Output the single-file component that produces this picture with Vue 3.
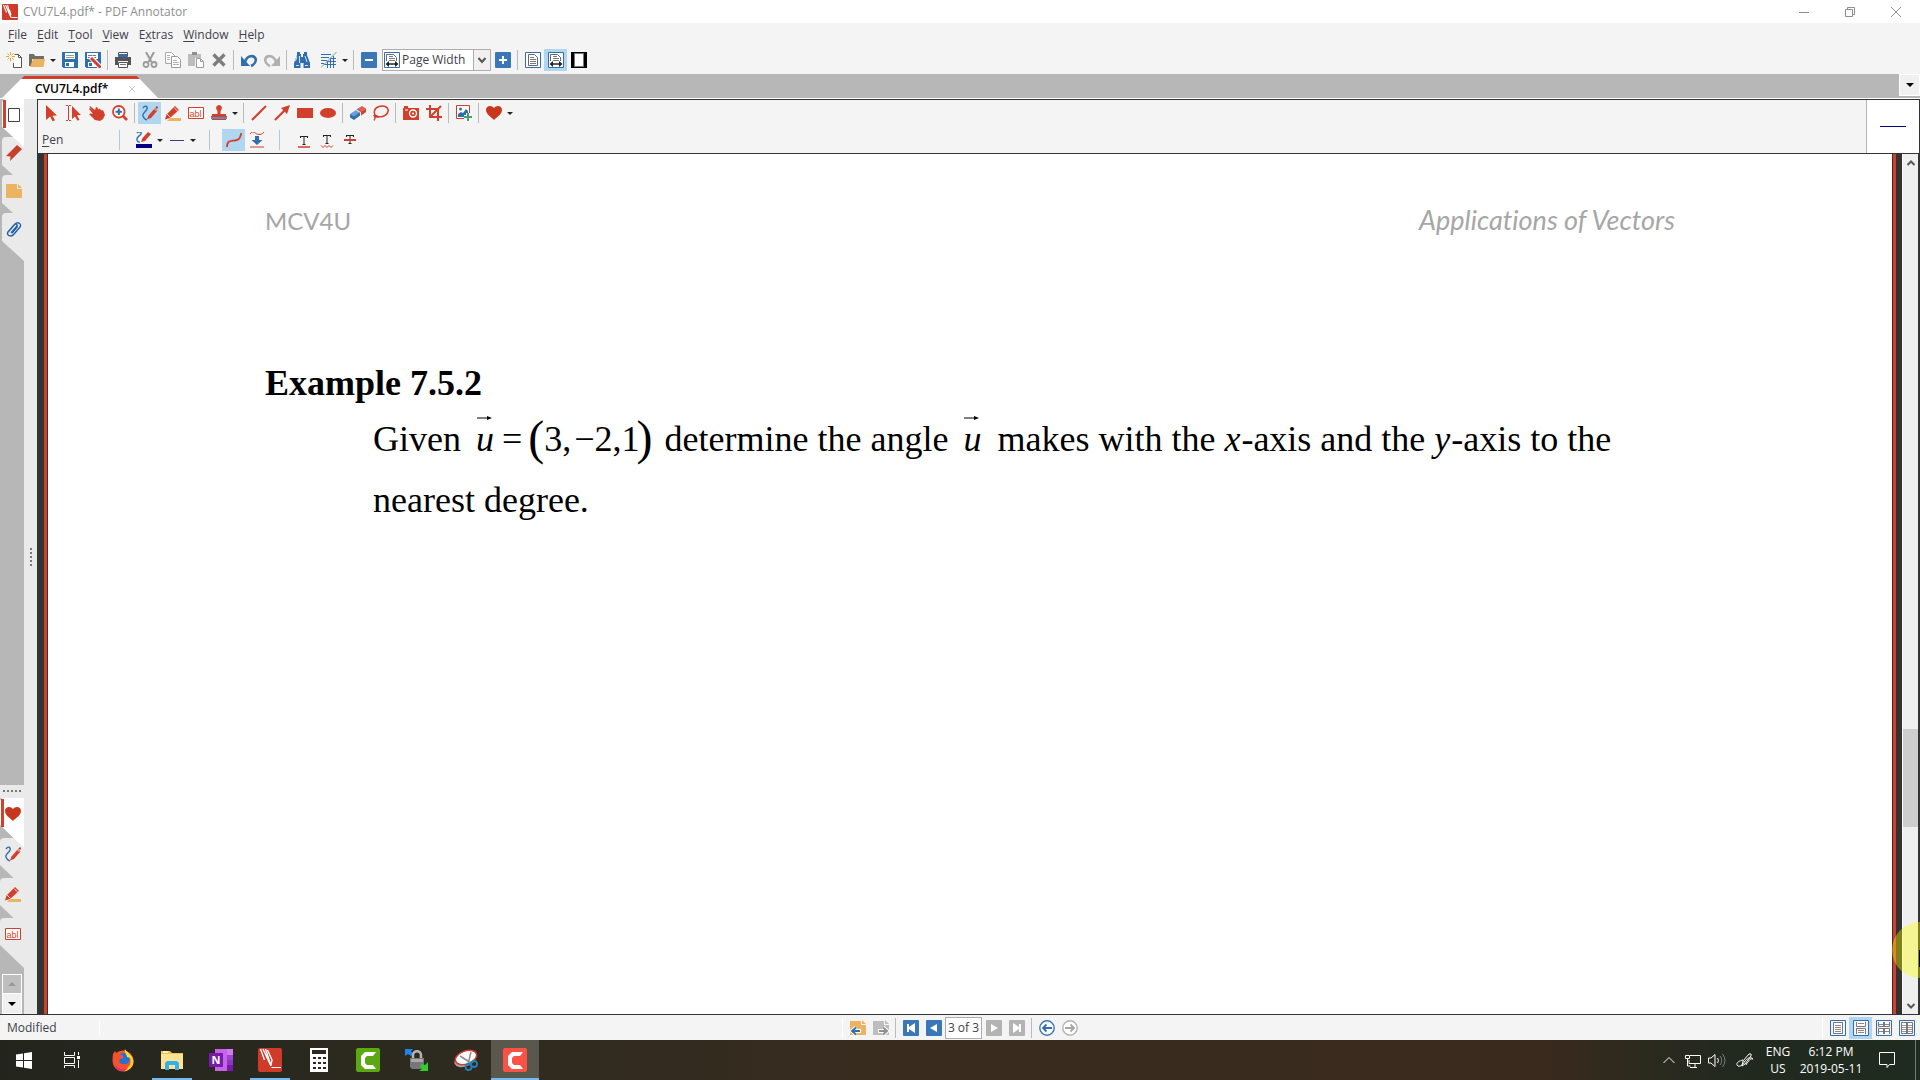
<script setup>
import { ref } from 'vue'

const icons = {
    logo: '<rect width="16" height="16" rx="1" fill="#d03a28"/><path d="M1.500 1l3 7.500M3.500 1l5 11.500M5.500 1l3.500 12.500M7.500 6l1.500 5" stroke="#fff" fill="none" stroke-width="1.100"/><path d="M9.500 13.500h6" stroke="#fff"/>',
    newDoc: '<path d="M8.500 2.500h4l3 3v10h-8V11" fill="#fff" stroke="#555"/><path d="M12.500 2.500v3h3" fill="none" stroke="#555"/><path d="M4.500 0v9M0 4.500h9M1.500 1.500l6 6M7.500 1.500l-6 6" stroke="#e8a53c"/><circle cx="4.500" cy="4.500" r="1.500" fill="#fff"/>',
    open: '<path d="M0 2h5l1 2h9v3H3v7H0z" fill="#6e6e6e"/><path d="M4 7h12l-1.500 8H1z" fill="#ecb461"/>',
    save: '<path d="M0 0h16v16H1.500L0 14.500z" fill="#2f6fb0"/><path d="M3 1h10v6H3zM3 10h9v5H3z" fill="#fff"/><path d="M4 3.500h8M4 5.500h8" stroke="#999"/><path d="M4 11h3v3H4z" fill="#2f6fb0"/>',
    saveAs: '<path d="M0 0h16v16H1.500L0 14.500z" fill="#2f6fb0"/><path d="M2 1h11v6H2zM3 10h9v5H3z" fill="#fff"/><path d="M3 3.500h8M3 5.500h8" stroke="#777"/><path d="M4 11h3v3H4z" fill="#2f6fb0"/><path d="M5.500 5l10 10.500" stroke="#fff" stroke-width="5"/><path d="M6 6l9.500 9.500" stroke="#d23f2a" stroke-width="3"/>',
    print: '<path d="M3.500.5h9v4h-9z" fill="#fff" stroke="#555"/><path d="M4 2h8v3H4z" fill="#2f6fb0"/><path d="M0 5h16v8h-3V9H3v4H0z" fill="#555"/><path d="M3.500 10.500h9v5h-9z" fill="#fff" stroke="#555"/><path d="M5 12.500h6" stroke="#777"/>',
    cut: '<path d="M4 0l5.500 10M12 0L6.500 10" stroke="#9b9b9b" stroke-width="2"/><circle cx="4" cy="12.500" r="2.500" fill="none" stroke="#9b9b9b" stroke-width="1.800"/><circle cx="12" cy="12.500" r="2.500" fill="none" stroke="#9b9b9b" stroke-width="1.800"/>',
    copy: '<path d="M.5.5h6l3 3v8h-9z" fill="#fff" stroke="#aaa"/><path d="M6.500 4.500h6l3 3v8h-9z" fill="#fff" stroke="#9b9b9b"/><path d="M2 3.500h3M2 5.500h3M2 7.500h3M8 8.500h4M8 10.500h6M8 12.500h6" stroke="#b5b5b5"/>',
    paste: '<path d="M0 2h13v4H7v8H0z" fill="#bdbdbd"/><path d="M4 0h5v3H4z" fill="#8f8f8f"/><path d="M8.500 6.500h4l3 3v6h-7z" fill="#fff" stroke="#9b9b9b"/><path d="M12.500 7v2.500H15" fill="none" stroke="#9b9b9b"/>',
    del: '<path d="M2.500 2.500l11 11M13.500 2.500l-11 11" stroke="#7d7d7d" stroke-width="3.200"/>',
    undo: '<path d="M4 10c2-7 9-7 10.500-3.500C15.500 9.500 13 12.500 10 14" fill="none" stroke="#2f6fb0" stroke-width="2.600"/><path d="M0 4v10h9z" fill="#2f6fb0"/>',
    redo: '<path d="M12 10C10 3 3 3 1.500 6.500.5 9.500 3 12.500 6 14" fill="none" stroke="#b0b0b0" stroke-width="2.600"/><path d="M16 4v10H7z" fill="#b0b0b0"/>',
    find: '<path d="M3 0h3v2h1v3h2V2h1V0h3v3l3 8v5H9.500v-5h-3v5H0v-5l3-8z" fill="#2f6fb0"/><path d="M3 4.500L1.500 9M5.500 4v7M11 4l2 6M2 13.500h3M11 13.500h3" stroke="#fff" stroke-width=".8"/>',
    grid: '<path d="M0 2.500h10M0 5.500h8M0 8.500h6M0 11.500h3M9 6.500h6M6 9.500h9M3 12.500h12M6.500 9v7M9.500 7v9M12.500 4v12" stroke="#2f6fb0"/><path d="M0 15.500L15.500 0" stroke="#6c9cc9"/>',
    minus: '<rect width="16" height="16" rx="1" fill="#3a77b7"/><path d="M4 8h8" stroke="#fff" stroke-width="2"/>',
    plus: '<rect width="16" height="16" rx="1" fill="#3a77b7"/><path d="M4 8h8M8 4v8" stroke="#fff" stroke-width="2"/>',
    fullPage: '<path d="M.5.5h15v15H.5z" fill="#fff" stroke="#2f6fb0"/><path d="M3.500 2.500h6l3 3v8h-9z" fill="#fff" stroke="#666"/><path d="M5 5.500h4M5 7.500h6M5 9.500h6M5 11.500h6" stroke="#777"/>',
    pageWidth: '<path d="M.5.5h15v15H.5z" fill="#fff" stroke="#2f6fb0"/><path d="M2.500 9V2.500h7l3 3V9" fill="#fff" stroke="#666"/><path d="M5 4.500h4M5 6.500h6M5 8.500h6" stroke="#777"/><path d="M3 12h10" stroke="#222" stroke-width="1.500"/><path d="M1.500 12l3.500-3v6zM14.500 12L11 9v6z" fill="#222"/>',
    fullScreen: '<path d="M0 0h16v16H0z"/><path d="M3.500 1.500h9v13h-9z" fill="#fff" stroke="#777"/>',
    select: '<path d="M3 0l11 10.500-4.500.3 2.500 4.500-2.500 1-2.300-4.700L3 15z" fill="#d23f2a"/>',
    textSelect: '<path d="M0 .5h2M3 .5h2M2.500 1v14M0 15.500h2M3 15.500h2" stroke="#d23f2a"/><path d="M6 1l9 9-4 .3 2.500 4.500-2 1L9 11.500 6 14z" fill="#d23f2a"/>',
    hand: '<path d="M1 1l5 4 1-3 1.500.5.5 2 2-1 1 2 2-.5L16 10l-2 4-3 2-5-1-6-6 2-.5L4 9 0 4l1-1 4 4L.5 2z" fill="#d23f2a"/>',
    zoom: '<circle cx="6.800" cy="6.800" r="5.800" fill="#fff" stroke="#d23f2a" stroke-width="1.800"/><path d="M3.500 6.800h6.600M6.800 3.500v6.600" stroke="#2f6fb0" stroke-width="2"/><path d="M11 11l4 4" stroke="#d23f2a" stroke-width="2.600"/>',
    pen: '<path d="M1 3c2-3 5-2 4 1S0 8 1 11s2 3 4 4" fill="none" stroke="#2f6fb0" stroke-width="1.400"/><path d="M5 14.500l1.500-4L13 3l2.500 2.500L9 13z" fill="#d23f2a"/><path d="M13.500 2.500L15 1l1 1.500-1 1.500z" fill="#b52e1d"/><path d="M12 3.500l2.500 2.500" stroke="#fff" stroke-width=".7"/>',
    marker: '<path d="M5 13h11v3H2z" fill="#ecb461"/><path d="M0 14.500l1.500-5L10 1l4 4-9 8z" fill="#d23f2a"/><path d="M9 2.500l4 4M2 9l3.500 3.500" stroke="#fff" stroke-width=".8"/>',
    textBox: '<path d="M.5 2.500h15v11H.5z" fill="#fff" stroke="#d23f2a"/><text x="1.500" y="11.500" font-family="Liberation Sans, sans-serif" font-size="9" fill="#d23f2a">abl</text>',
    stamp: '<path d="M8 0a3 3 0 0 1 2.500 4.500L9.500 6v3H15v2H1V9h5.500V6l-1-1.500A3 3 0 0 1 8 0z" fill="#d23f2a"/><path d="M0 12h16v2H0z" fill="#6c86b5"/><path d="M0 11h16v1H0zM1 14h14v1H1z" fill="#d23f2a"/>',
    line: '<path d="M1 15L15 1" stroke="#d23f2a" stroke-width="2"/>',
    arrow: '<path d="M1 15L12 4" stroke="#d23f2a" stroke-width="2.200"/><path d="M16 0l-3 9-6-6z" fill="#d23f2a"/>',
    rect: '<path d="M0 3h16v10H0z" fill="#d23f2a"/>',
    ellipse: '<ellipse cx="8" cy="8" rx="8" ry="5" fill="#d23f2a"/>',
    eraser: '<path d="M0 9l9-6 3 3-8 7.500z" fill="#69a0d6"/><path d="M0 9l4 2.500V15l-4-2.500zM4 11.500L10 7v3.500L4 15z" fill="#2f6fb0"/><path d="M7 4l5-3 4 2.500L10.500 7z" fill="#e0604d"/><path d="M10.500 7L16 3.500V7l-5.500 4z" fill="#d23f2a"/><path d="M6 5l4.500 2.500V11" fill="none" stroke="#fff" stroke-width=".8"/>',
    lasso: '<path d="M3 11C0 8 1 3 6 1.500s10 .5 9 5-8 6.500-12 4.500" fill="none" stroke="#d23f2a" stroke-width="1.500"/><path d="M0 10h4l2 3-3-.5L1.500 16l-1-1 1-2z" fill="#d23f2a"/>',
    camera: '<path d="M1 1h4v2h11v12H0V3h1z" fill="#d23f2a"/><circle cx="10" cy="8.500" r="3.500" fill="none" stroke="#fff" stroke-width="1.400"/><circle cx="10" cy="8.500" r="1" fill="#fff"/><path d="M2 5h3" stroke="#fff"/>',
    crop: '<path d="M0 4h12v12M4 0v12h12M15 1L4 12" fill="none" stroke="#d23f2a" stroke-width="2"/>',
    picture: '<path d="M.5.5h13v13H.5z" fill="#fff" stroke="#d23f2a"/><path d="M2 12V9l3-2 2 1 3-4 2 2v6z" fill="#2f6fb0"/><circle cx="4.500" cy="4" r="1.500" fill="#2f6fb0"/><path d="M12 8v8M8 12h8" stroke="#fff" stroke-width="4"/><path d="M12 8v8M8 12h8" stroke="#3ca371" stroke-width="2"/>',
    heart: '<path d="M8 15C5 12 0 9 0 5c0-5 6-5 8-2 2-3 8-3 8 2 0 4-5 7-8 10z" fill="#c8361c"/>',
    penColor: '<path d="M1 1c2-2 5-1 4 1S0 5 1 8s2 2 3 2" fill="none" stroke="#2f6fb0" stroke-width="1.400"/><path d="M5 10l1.500-4L12 0l3 2-6 7z" fill="#d23f2a"/><path d="M0 12h16v4H0z" fill="#000080"/>',
    thin: '<path d="M1 8.500h14" stroke="#3c3c8c"/>',
    curve: '<path d="M1 15c0-7 4-6 8-6.500C14 8 14 5 15.500 1" fill="none" stroke="#d23f2a" stroke-width="1.800"/>',
    snap: '<path d="M1 2c2-3 4-2 6-.5S13 3 15 0" fill="none" stroke="#d23f2a"/><path d="M6 4h4v4h3.500L8 13 2.500 8H6z" fill="#2f6fb0"/><path d="M1 15h14" stroke="#d23f2a"/>',
    under: '<path d="M4 4.500h8M8 4v9M6.500 12.500h3M4.500 4v2M11.500 4v2" stroke="#222"/><path d="M2 15h12" stroke="#d23f2a" stroke-width="1.500"/>',
    squiggle: '<path d="M4 3.500h8M8 3v9M6.500 11.500h3M4.500 3v2M11.500 3v2" stroke="#222"/><path d="M2 13.500l2 2 2-2 2 2 2-2 2 2 2-2" fill="none" stroke="#d23f2a"/>',
    strike: '<path d="M4 3.500h8M8 3v9M6.500 11.500h3M4.500 3v2M11.500 3v2" stroke="#222"/><path d="M2 8h12" stroke="#d23f2a" stroke-width="2"/>',
    page: '<path d="M2.500 1.500h11v13h-11z" fill="#fff" stroke="#444"/>',
    bookmark: '<path d="M0 11L11 0l5 4L4 16l.5-4.500z" fill="#c8402a"/>',
    note: '<path d="M0 1h11v5h5v9H0z" fill="#ecb461"/><path d="M12 1l4 4h-4z" fill="#ecb461"/>',
    clip: '<path d="M3 10l6-7c3-3 7 0 5 3l-6 7c-3 4-8 1-6-2l6-7c2-2 4 0 3 2l-5 6M5 12l6-7" fill="none" stroke="#1f5fa8" stroke-width="1.400"/>',
    notePrev: '<path d="M0 1h11v4h5v10H0z" fill="#ecb461"/><path d="M12 0l4 4h-4z" fill="#ecb461"/><path d="M2 11h9M6 7.500L2 11l4 3.500" fill="none" stroke="#fff" stroke-width="4"/><path d="M2 11h8M6 7.500L2 11l4 3.500" fill="none" stroke="#2f6fb0" stroke-width="2"/>',
    noteNext: '<path d="M0 1h11v4h5v10H0z" fill="#bdbdbd"/><path d="M12 0l4 4h-4z" fill="#bdbdbd"/><path d="M5 11h9M10 7.500l4 3.500-4 3.500" fill="none" stroke="#fff" stroke-width="4"/><path d="M6 11h8M10 7.500l4 3.500-4 3.500" fill="none" stroke="#8f8f8f" stroke-width="2"/>',
    first: '<rect width="16" height="16" rx="1" fill="#3a77b7"/><path d="M4 4h2v3l6-4v10L6 9v3H4z" fill="#fff"/>',
    prev: '<rect width="16" height="16" rx="1" fill="#3a77b7"/><path d="M11 4v8L4 8z" fill="#fff"/>',
    next: '<rect width="16" height="16" rx="1" fill="#b3b3b3"/><path d="M5 4v8l7-4z" fill="#fff"/>',
    last: '<rect width="16" height="16" rx="1" fill="#b3b3b3"/><path d="M12 4h-2v3L4 3v10l6-4v3h2z" fill="#fff"/>',
    back: '<circle cx="8" cy="8" r="7.200" fill="#fff" stroke="#3a77b7" stroke-width="1.400"/><path d="M4 8h9M7.500 4.500L4 8l3.500 3.500" fill="none" stroke="#2f6fb0" stroke-width="1.800"/>',
    forward: '<circle cx="8" cy="8" r="7.200" fill="#fff" stroke="#b3b3b3" stroke-width="1.400"/><path d="M3 8h9M8.500 4.500L12 8l-3.500 3.500" fill="none" stroke="#a5a5a5" stroke-width="1.800"/>',
    viewSingle: '<path d="M.5.5h15v15H.5z" fill="#f4f4f4" stroke="#2f6fb0"/><path d="M3.500 2.500h9v11h-9z" fill="#fff" stroke="#777"/><path d="M5 5.500h6M5 7.500h6M5 9.500h6M5 11.500h6" stroke="#888"/>',
    viewScroll: '<path d="M.5.5h15v15H.5z" fill="#f4f4f4" stroke="#2f6fb0"/><path d="M3.500 2v4.500h9V2M3.500 14V8.500h9V14" fill="#fff" stroke="#777"/><path d="M5 3.500h6M5 10.500h6M5 12.500h6" stroke="#888"/>',
    viewTwoScroll: '<path d="M.5.5h15v15H.5z" fill="#f4f4f4" stroke="#2f6fb0"/><path d="M2.500 2v4.500h11V2M2.500 14V8.500h11V14" fill="#fff" stroke="#777"/><path d="M3 4.500h10M3 11.500h10" stroke="#888"/><path d="M8 2v5M8 9v5" stroke="#777" stroke-width="2"/>',
    viewTwo: '<path d="M.5.5h15v15H.5z" fill="#f4f4f4" stroke="#2f6fb0"/><path d="M2.500 2.500h11v11h-11z" fill="#fff" stroke="#777"/><path d="M3 5.500h10M3 7.500h10M3 9.500h10M3 11.500h10" stroke="#999"/><path d="M8 2v12" stroke="#777" stroke-width="2"/>'
}

const menus = [['', 'F', 'ile'], ['', 'E', 'dit'], ['', 'T', 'ool'], ['', 'V', 'iew'], ['E', 'x', 'tras'], ['', 'W', 'indow'], ['', 'H', 'elp']]

const fileTools = ['newDoc', 'open', 'drop', 'save', 'saveAs', '|', 'print', ' ', 'cut', 'copy', 'paste', 'del', '|', 'undo', 'redo', '|', 'find', ' ', 'grid', 'drop', '|', 'minus']
const viewTools = ['plus', '|', 'fullPage', 'pageWidth', 'fullScreen']
const drawTools = ['select', 'textSelect', 'hand', 'zoom', '|', 'pen', 'marker', 'textBox', 'stamp', 'drop', '|', 'line', 'arrow', 'rect', 'ellipse', '|', 'eraser', 'lasso', '|', 'camera', 'crop', '|', 'picture', '|', 'heart', 'drop']
const penTools = ['penColor', 'drop', 'thin', 'drop']
const penModes = ['curve', 'snap']
const penMarks = ['under', 'squiggle', 'strike']
const active = ['pageWidth', 'pen', 'curve', 'viewScroll']

const navTabs = ['page', 'bookmark', 'note', 'clip']
const toolTabs = ['heart', 'pen', 'marker', 'textBox']

const zoomMode = ref('Page Width')
const pageNo = ref('3 of 3')
const scroll = { before: 559, size: 98, after: 170 }

const apps = [
    { name: 'Firefox', svg: '<circle cx="12" cy="13" r="10.500" fill="#f7572b"/><path d="M13 2c4 2 9 6 9.500 11S18 23 13 23.500C19 20 20 9 13 2z" fill="#ffcf2e"/><circle cx="12.500" cy="11.500" r="6.500" fill="#1b74d6"/><path d="M2 6l2-3 2 3 5 1 2 3-4 1c-2 3 1 6 5 5 3 0 5-3 5-6 2 5-1 11-7 11S0 16 2 6z" fill="#f5512c"/><path d="M4 16c2 5 8 7 13 4-3 4-12 5-13-4z" fill="#e3287c"/><path d="M14 1c1 3 5 4 6 9l-4-1c0-3-3-4-2-8z" fill="#ffdb3c"/>' },
    { name: 'File Explorer', open: true, svg: '<path d="M1 3h9l2 2h11v16H1z" fill="#f3c24f"/><path d="M1 6h22v15H1z" fill="#ffe394"/><path d="M3 3h5v2H3z" fill="#fff2c5"/><path d="M5 22v-7l2-2h10l2 2v7h-4v-5H9v5z" fill="#35b0ea"/>' },
    { name: 'OneNote', svg: '<path d="M6 1h18v22H6z" fill="#c765e8"/><path d="M18 1h6v6h-6z" fill="#cf7bee"/><path d="M18 7h6v5h-6z" fill="#a242d3"/><path d="M18 12h6v5h-6z" fill="#8e36c4"/><path d="M18 17h6v6h-6z" fill="#7719aa"/><path d="M0 5h14v14H0z" fill="#7719aa"/><text x="2.500" y="16" font-family="Open Sans, sans-serif" font-weight="700" font-size="11" fill="#fff">N</text>' },
    { name: 'PDF Annotator', open: true, svg: '<rect width="24" height="24" rx="2" fill="#d03a28"/><path d="M2.500 1l4 11M5 1l7.500 16M7.500 1l5.500 17M9.500 2l4.500 10-1 5" fill="none" stroke="#fff" stroke-width="1.400"/><path d="M13.500 19.500H23" stroke="#fff"/>' },
    { name: 'Calculator', svg: '<path d="M3 0h18v24H3z" fill="#fff"/><path d="M5 2h14v4H5zM6 9h3v2H6zM11 9h3v2h-3zM16 9h3v2h-3zM6 14h3v2H6zM11 14h3v2h-3zM16 14h3v2h-3zM6 19h3v2H6zM11 19h3v2h-3zM16 19h3v2h-3z" fill="#2c2a20"/>' },
    { name: 'Camtasia', svg: '<rect width="24" height="24" rx="2" fill="#5ba812"/><path d="M20 4H9L5 8v9l4 4h11l-3-4h-6l-2-2v-5l2-2h6z" fill="#fff"/>' },
    { name: 'Secure Transfer', svg: '<path d="M0 1h8l-2 2 2 3-2 2-3-2-3 2z" fill="#2183f2"/><path d="M8 12V7c0-5 8-5 8 0v5" fill="none" stroke="#b5b5b5" stroke-width="2.500"/><path d="M5 10h14v11H7l-2-2z" fill="#777"/><path d="M6 11h12v3H6z" fill="#a9a9a9"/><path d="M23 23h-9l3-2-2-3 2-2 3 1 3-3z" fill="#2fd02f"/>' },
    { name: 'Snipping Tool', svg: '<ellipse cx="11" cy="12" rx="11" ry="6.500" fill="#a8a8a8" transform="rotate(-20 11 12)"/><ellipse cx="12" cy="9.500" rx="11" ry="6.500" fill="#fff" stroke="#d9372f" stroke-width="1.500" transform="rotate(-20 12 9.500)"/><path d="M6 8l11 7M17 4l-3 12" stroke="#8d8d8d" stroke-width="1.500"/><circle cx="14.500" cy="19" r="3" fill="none" stroke="#277fb5" stroke-width="1.800"/><circle cx="20" cy="16" r="3" fill="none" stroke="#277fb5" stroke-width="1.800"/>' },
    { name: 'Camtasia Recorder', current: true, svg: '<rect width="24" height="24" rx="2" fill="#fb5245"/><path d="M20 4H9L5 8v9l4 4h11l-3-4h-6l-2-2v-5l2-2h6z" fill="#fff"/>' }
]
</script>

<template>
    <div class="screen">
        <header class="title-bar">
            <svg class="icon" viewBox="0 0 16 16" v-html="icons.logo"></svg>
            <span class="title">CVU7L4.pdf* - PDF Annotator</span>
            <div class="window-buttons">
                <button aria-label="Minimize"><svg class="icon" viewBox="0 0 16 16"><path d="M3 8.500h10" /></svg></button>
                <button aria-label="Restore"><svg class="icon" viewBox="0 0 16 16"><path d="M3.500 5.500h7v7h-7zM5.500 5V3.500h7v7H11" /></svg></button>
                <button aria-label="Close"><svg class="icon" viewBox="0 0 16 16"><path d="M3 3l10 10M13 3L3 13" /></svg></button>
            </div>
        </header>

        <nav class="menu-bar">
            <button v-for="m in menus" :key="m.join('')">{{ m[0] }}<u>{{ m[1] }}</u>{{ m[2] }}</button>
        </nav>

        <div class="toolbar main-tools">
            <template v-for="(t, i) in fileTools" :key="i">
                <i v-if="t === '|'" class="sep"></i>
                <i v-else-if="t === ' '" class="space"></i>
                <button v-else-if="t === 'drop'" class="drop" aria-label="More"></button>
                <button v-else class="tool" :aria-label="t"><svg class="icon" viewBox="0 0 16 16" v-html="icons[t]"></svg></button>
            </template>
            <label class="combo">
                <svg class="icon" viewBox="0 0 16 16" v-html="icons.pageWidth"></svg>
                <select v-model="zoomMode" aria-label="Zoom">
                    <option>Page Width</option>
                    <option>Full Page</option>
                </select>
                <span class="combo-arrow"><svg viewBox="0 0 10 10"><path d="M1.500 3L5 7l3.500-4" /></svg></span>
            </label>
            <template v-for="(t, i) in viewTools" :key="i">
                <i v-if="t === '|'" class="sep"></i>
                <button v-else class="tool" :class="{ on: active.includes(t) }" :aria-label="t"><svg class="icon" viewBox="0 0 16 16" v-html="icons[t]"></svg></button>
            </template>
        </div>

        <div class="tab-bar">
            <div class="doc-tab">
                <span>CVU7L4.pdf*</span>
                <button aria-label="Close tab"><svg viewBox="0 0 8 8"><path d="M1 1l6 6M7 1L1 7" /></svg></button>
            </div>
            <button class="tab-list" aria-label="Documents"></button>
        </div>

        <main class="work">
            <aside class="side">
                <div class="strip">
                    <div class="tabs nav">
                        <button v-for="(t, i) in navTabs" :key="t" :class="{ on: i === 0 }" :aria-label="t">
                            <svg class="shape" viewBox="0 0 24 48"><path d="M24 0H6Q2 0 2 4v24l22 20z" /></svg>
                            <svg class="icon" viewBox="0 0 16 16" v-html="icons[t]"></svg>
                        </button>
                    </div>
                    <div class="grip row"></div>
                    <div class="tabs tools">
                        <button v-for="(t, i) in toolTabs" :key="t" :class="{ on: i === 0 }" :aria-label="t">
                            <svg class="shape" viewBox="0 0 24 48"><path d="M24 0H4Q0 0 0 4v23l24 23z" /></svg>
                            <svg class="icon" viewBox="0 0 16 16" v-html="icons[t]"></svg>
                        </button>
                    </div>
                    <div class="spin">
                        <button class="up" aria-label="Up" disabled></button>
                        <button class="down" aria-label="Down"></button>
                    </div>
                </div>
                <div class="splitter"><i class="grip"></i></div>
            </aside>

            <section class="editor">
                <div class="annot-bar">
                    <div class="annot-rows">
                        <div class="toolbar">
                            <template v-for="(t, i) in drawTools" :key="i">
                                <i v-if="t === '|'" class="sep"></i>
                                <button v-else-if="t === 'drop'" class="drop" aria-label="More"></button>
                                <button v-else class="tool" :class="{ on: active.includes(t) }" :aria-label="t"><svg class="icon" viewBox="0 0 16 16" v-html="icons[t]"></svg></button>
                            </template>
                        </div>
                        <div class="toolbar pen-row">
                            <span class="pen-name"><u>P</u>en</span>
                            <i class="sep"></i>
                            <div class="group">
                                <template v-for="(t, i) in penTools" :key="i">
                                    <button v-if="t === 'drop'" class="drop" aria-label="More"></button>
                                    <button v-else class="tool" :aria-label="t"><svg class="icon" viewBox="0 0 16 16" v-html="icons[t]"></svg></button>
                                </template>
                            </div>
                            <i class="sep"></i>
                            <div class="group">
                                <button v-for="t in penModes" :key="t" class="tool" :class="{ on: active.includes(t) }" :aria-label="t"><svg class="icon" viewBox="0 0 16 16" v-html="icons[t]"></svg></button>
                            </div>
                            <i class="sep"></i>
                            <div class="group">
                                <button v-for="t in penMarks" :key="t" class="tool" :aria-label="t"><svg class="icon" viewBox="0 0 16 16" v-html="icons[t]"></svg></button>
                            </div>
                        </div>
                    </div>
                    <div class="preview"><i></i></div>
                </div>

                <div class="view">
                    <article class="paper">
                        <div class="running-head">
                            <span>MCV4U</span>
                            <em>Applications of Vectors</em>
                        </div>
                        <h1>Example 7.5.2</h1>
                        <p>
                            Given
                            <span class="math equation"><span class="vec">u<svg viewBox="0 0 16 6"><path d="M0 3h12" /><path class="head" d="M10 1l5 2-5 2z" /></svg></span><span class="eq">=</span><span class="paren">(</span>3,<span class="neg">−</span>2,1<span class="paren close">)</span></span>
                            determine the angle
                            <span class="math"><span class="vec">u<svg viewBox="0 0 16 6"><path d="M0 3h12" /><path class="head" d="M10 1l5 2-5 2z" /></svg></span></span>
                            makes with the <i>x</i>-axis and the <i>y</i>-axis to the
                            <span>nearest degree.</span>
                        </p>
                    </article>
                    <div class="scrollbar">
                        <button aria-label="Scroll up"><svg viewBox="0 0 10 10"><path d="M1.500 7L5 3.500 8.500 7" /></svg></button>
                        <div class="track">
                            <div :style="{ flexGrow: scroll.before }"></div>
                            <div class="thumb" :style="{ flexGrow: scroll.size }"></div>
                            <div :style="{ flexGrow: scroll.after }"></div>
                        </div>
                        <button aria-label="Scroll down"><svg viewBox="0 0 10 10"><path d="M1.500 3L5 6.500 8.500 3" /></svg></button>
                    </div>
                    <div class="pointer"><i></i></div>
                </div>
            </section>
        </main>

        <footer class="status">
            <span class="state">Modified</span>
            <div class="toolbar">
                <i class="sep light"></i>
                <button v-for="t in ['notePrev', 'noteNext']" :key="t" class="tool" :aria-label="t"><svg class="icon" viewBox="0 0 16 16" v-html="icons[t]"></svg></button>
                <i class="sep"></i>
                <button v-for="t in ['first', 'prev']" :key="t" class="tool" :aria-label="t"><svg class="icon" viewBox="0 0 16 16" v-html="icons[t]"></svg></button>
                <input v-model="pageNo" aria-label="Page">
                <button v-for="t in ['next', 'last']" :key="t" class="tool" :aria-label="t"><svg class="icon" viewBox="0 0 16 16" v-html="icons[t]"></svg></button>
                <i class="sep"></i>
                <button v-for="t in ['back', 'forward']" :key="t" class="tool" :aria-label="t"><svg class="icon" viewBox="0 0 16 16" v-html="icons[t]"></svg></button>
            </div>
            <div class="toolbar views">
                <i class="sep light"></i>
                <button v-for="t in ['viewSingle', 'viewScroll', 'viewTwoScroll', 'viewTwo']" :key="t" class="tool" :class="{ on: active.includes(t) }" :aria-label="t"><svg class="icon" viewBox="0 0 16 16" v-html="icons[t]"></svg></button>
            </div>
        </footer>

        <div class="taskbar">
            <button class="app" aria-label="Start"><svg viewBox="0 0 24 24"><path d="M4 6.500l7-1V12H4zM12 5.300L20 4v8h-8zM4 13h7v6.500l-7-1zM12 13h8v8l-8-1.300z" fill="#fff" /></svg></button>
            <button class="app" aria-label="Task View"><svg viewBox="0 0 24 24"><path d="M4.500 4v3.500h10V4M4.500 9.500h10v6h-10zM4.500 20v-2.500h10V20M18.500 4v3M18.500 12v8" fill="none" stroke="#fff" /><path d="M17 8h3v3h-3z" fill="#fff" /></svg></button>
            <div class="apps">
                <button v-for="a in apps" :key="a.name" class="app" :class="{ open: a.open, current: a.current }" :aria-label="a.name">
                    <svg viewBox="0 0 24 24" v-html="a.svg"></svg>
                </button>
            </div>
            <div class="tray">
                <svg viewBox="0 0 24 24"><path d="M6.500 15L12 9.500l5.500 5.500" /></svg>
                <svg viewBox="0 0 24 24"><path d="M9 7.500h10.500v8H8V12M14 15.500v4M9 19.500h7M4.500 7.500h4v3h-4zM6.500 11v7h3" /></svg>
                <svg viewBox="0 0 24 24"><path d="M3.500 10v5H6l4 3.500v-12L6 10zM12.500 10q2 2.500 0 5" /><path class="dim" d="M15 8q3.500 4.500 0 9M17.500 6q5 6.500 0 13" /></svg>
                <svg class="ink" viewBox="0 0 24 24"><path d="M9 18l1-5 6-7q3-1 2 2l-6 8zM10 12c-5 1-8 4-5 6 3 1 5-2 7-5 2-2 5-5 8-2-4-1-4 3-6 4l-1 2" /></svg>
                <div class="lang"><span>ENG</span><span>US</span></div>
                <div class="clock"><span>6:12 PM</span><span>2019-05-11</span></div>
                <svg class="notes" viewBox="0 0 24 24"><path d="M4.500 4.500h15v12h-5L12 19.500V16.500H4.500z" /></svg>
            </div>
        </div>
    </div>
</template>

<style>
body {
    margin: 0;
}
</style>

<style scoped>
.screen {
    display: flex;
    flex-direction: column;
    min-height: 100vh;
    overflow: hidden;
    background: #f4f4f4;
    color: #3f3f4a;
    font: 12px/16px "Open Sans", "Noto Sans", sans-serif;
}

button,
input,
select {
    border: 0;
    padding: 0;
    margin: 0;
    background: none;
    color: inherit;
    font: inherit;
    border-radius: 0;
}

svg {
    display: block;
    flex: none;
}

u {
    text-underline-offset: 2px;
}

.icon {
    width: 16px;
    height: 16px;
}

/* title and menus */
.title-bar {
    display: flex;
    align-items: center;
    gap: 5px;
    height: 23px;
    padding: 0 1px 0 2px;
    background: #fff;
    color: #8e8e8e;
}

.title {
    flex: 1;
}

.window-buttons {
    display: flex;
}

.window-buttons button {
    display: grid;
    place-items: center;
    width: 46px;
    height: 20px;
}

.window-buttons path {
    fill: none;
    stroke: #8e8e8e;
}

.menu-bar {
    display: flex;
    height: 23px;
    padding: 0 0 2px 3px;
}

.menu-bar button {
    padding: 0 5px;
}

/* toolbars */
.toolbar,
.group {
    display: flex;
    align-items: center;
}

.toolbar {
    height: 22px;
}

.main-tools {
    height: 24px;
    padding: 0 0 2px 2px;
}

.tool {
    display: grid;
    place-items: center;
    width: 23px;
    height: 22px;
}

.tool.on {
    background: #b1d6f0;
}

.sep {
    width: 1px;
    height: 20px;
    margin: 0 3px;
    background: #bababa;
}

.sep.light {
    background: #fff;
}

.space {
    width: 4px;
}

.drop {
    width: 10px;
    height: 22px;
    display: grid;
    place-items: center;
}

.drop::before,
.tab-list::before,
.spin button::before {
    content: "";
    border: solid transparent;
    border-width: 3px 3px 0;
    border-top-color: #222;
}

.tab-list::before,
.spin button::before {
    border-width: 4px 4px 0;
    border-top-color: #000;
}

.combo {
    display: flex;
    align-items: center;
    box-sizing: border-box;
    width: 109px;
    height: 22px;
    margin-left: 2px;
    padding-left: 1px;
    border: 1px solid #adadad;
    background: #fff;
}

.combo select {
    flex: 1;
    min-width: 0;
    height: 20px;
    padding-left: 2px;
    appearance: none;
    outline: 0;
}

.combo-arrow {
    display: grid;
    place-items: center;
    width: 16px;
    height: 20px;
    border-left: 1px solid #adadad;
    background: #f0f0f0;
}

.combo-arrow svg,
.scrollbar svg {
    width: 10px;
    height: 10px;
    fill: none;
    stroke: #555;
    stroke-width: 2;
}

/* document tabs */
.tab-bar {
    display: flex;
    justify-content: space-between;
    align-items: flex-end;
    height: 24px;
    padding-left: 2px;
    border-bottom: 1px solid #fff;
    background: #b7b7b7;
}

.doc-tab {
    display: flex;
    align-items: center;
    justify-content: space-between;
    box-sizing: border-box;
    width: 156px;
    height: 22px;
    padding: 0 22px 0 33px;
    border-top: 3px solid #d23f2a;
    background: #fff;
    clip-path: polygon(22px 0, 135px 0, 100% 100%, 0 100%);
    color: #000;
    font-weight: 600;
}

.doc-tab svg {
    width: 8px;
    height: 8px;
    fill: none;
    stroke: #ccc;
    stroke-width: 1;
}

.tab-list {
    display: grid;
    place-items: center;
    align-self: flex-start;
    box-sizing: border-box;
    width: 21px;
    height: 22px;
    border: 1px solid #fff;
    background: #f0f0f0;
}

/* side panel */
.work {
    display: flex;
    flex: 1;
}

.side {
    display: flex;
    width: 37px;
    background: #eaeaea;
}

.strip {
    display: flex;
    flex-direction: column;
    width: 24px;
    background: #b7b7b7;
}

.tabs {
    isolation: isolate;
}

.tabs.nav {
    flex: 1;
}

.tabs button {
    position: relative;
    display: grid;
    width: 24px;
    height: 38px;
    padding: 8px 0 0 6px;
    align-content: start;
}

.tabs.tools {
    padding-bottom: 16px;
}

.tabs.tools button {
    height: 40px;
    padding-left: 5px;
}

.tabs .icon {
    position: relative;
}

.tabs .shape {
    position: absolute;
    top: 0;
    left: 0;
    width: 24px;
    height: 48px;
    overflow: visible;
    fill: #eaeaea;
}

.tabs .on {
    z-index: 1;
}

.tabs .on .shape {
    fill: #fff;
}

.tabs .on::before {
    content: "";
    position: absolute;
    z-index: 1;
    top: 1px;
    left: 3px;
    width: 3px;
    height: 28px;
    background: #d23f2a;
}

.tabs.tools .on::before {
    left: 1px;
}

.grip {
    width: 2px;
    height: 18px;
    background: repeating-linear-gradient(#777 0 2px, transparent 2px 4px);
}

.grip.row {
    width: 24px;
    height: 13px;
    background: repeating-linear-gradient(90deg, #777 0 2px, transparent 2px 4px) 3px 5px / 18px 2px no-repeat #eaeaea;
}

.spin {
    margin: 0 2px;
    border: 1px solid #fff;
}

.spin button {
    display: grid;
    place-items: center;
    width: 18px;
    height: 19px;
    background: #f0f0f0;
}

.spin .up {
    background: #bfbfbf;
    border-bottom: 1px solid #fff;
}

.spin .up::before {
    border-width: 0 4px 4px;
    border-color: transparent transparent #999;
}

.splitter {
    display: grid;
    place-items: center;
    width: 13px;
}

/* annotation tools */
.editor {
    display: flex;
    flex: 1;
    flex-direction: column;
    min-width: 0;
}

.annot-bar {
    display: flex;
    height: 53px;
    border: 1px solid #333;
    background: #f4f4f4;
}

.annot-rows {
    display: flex;
    flex: 1;
    flex-direction: column;
    gap: 5px;
    padding: 2px 1px;
}

.pen-row .sep {
    background: #b9c6d6;
}

.pen-name {
    width: 74px;
    padding-left: 3px;
}

.pen-row .group {
    padding: 0 8px 0 9px;
}

.preview {
    display: grid;
    place-items: center;
    width: 52px;
    border-left: 1px solid #b5b5b5;
    background: #fff;
}

.preview i {
    width: 26px;
    height: 1px;
    background: #000080;
}

/* page */
.view {
    position: relative;
    display: flex;
    flex: 1;
    padding-left: 7px;
    background: #333;
}

.paper {
    flex: 1;
    box-sizing: border-box;
    margin-right: 6px;
    padding: 50px 218px 0;
    border: solid #d23f2a;
    border-width: 0 3px;
    box-shadow: inset 1px 0 #333, inset -1px 0 #333;
    background: #fff;
    color: #000;
    font: 36px/61px "Liberation Serif", serif;
}

.running-head {
    display: flex;
    justify-content: space-between;
    align-items: baseline;
    height: 32px;
    color: #a6a6a6;
    font: 24px/32px Lato, sans-serif;
    font-variant-ligatures: none;
}

.running-head em {
    font-size: 27px;
}

.paper h1 {
    margin: 122px 0 0;
    font-size: 36px;
    line-height: 51px;
}

.paper p {
    margin: 0;
    padding-left: 108px;
}

.paper p i {
    margin-right: 1px;
}

.math {
    margin: 0 7px 0 6px;
    white-space: nowrap;
    line-height: 0;
}

.equation {
    margin-right: 3px;
}

.vec {
    position: relative;
    font-style: italic;
}

.vec svg {
    position: absolute;
    top: -4px;
    left: 1px;
    width: 16px;
    height: 6px;
}

.vec path {
    stroke: #000;
}

.vec .head {
    stroke: none;
}

.eq {
    margin: 0 6px 0 8px;
}

.paren {
    font-size: 48px;
    vertical-align: -3px;
}

.paren.close {
    margin-left: -3px;
}

.neg {
    margin-left: 3px;
}

.scrollbar {
    display: flex;
    flex-direction: column;
    width: 15px;
    margin-right: 2px;
    border-left: 1px solid #fff;
    background: #efefef;
}

.scrollbar button {
    display: grid;
    place-items: center;
    height: 17px;
}

.track {
    display: flex;
    flex: 1;
    flex-direction: column;
}

.thumb {
    background: #cdcdcd;
}

.pointer {
    position: absolute;
    right: -28px;
    bottom: 36px;
    display: flex;
    align-items: flex-end;
    width: 56px;
    height: 56px;
    border-radius: 50%;
    background: rgba(255, 255, 0, .38);
}

.pointer i {
    width: 1px;
    height: 17px;
    margin: 0 0 11px 27px;
    background: #000;
}

/* status bar */
.status {
    display: grid;
    grid-template-columns: 1fr auto 1fr;
    align-items: center;
    height: 25px;
    border-top: 1px solid #333;
}

.state {
    width: 92px;
    padding-left: 7px;
    border-right: 1px solid #fff;
}

.status input {
    box-sizing: border-box;
    width: 37px;
    height: 22px;
    border: 1px solid #adadad;
    background: #fff;
    text-align: center;
}

.views {
    justify-content: flex-end;
    padding-right: 2px;
}

/* taskbar */
.taskbar {
    display: flex;
    height: 40px;
    background: linear-gradient(90deg, #23251d, #2c2a1f 20%, #382c1f 45%, #3a2a1d 80%, #22291f 90%, #1f2b20);
    color: #fff;
}

.app {
    display: grid;
    place-items: center;
    box-sizing: border-box;
    width: 48px;
    height: 40px;
}

.app svg {
    width: 24px;
    height: 24px;
}

.apps {
    display: flex;
    flex: 1;
    gap: 1px;
    padding-left: 3px;
}

.app.open {
    background: linear-gradient(#76b9ed, #76b9ed) 4px 38px / 40px 2px no-repeat;
}

.app.current {
    background: linear-gradient(#76b9ed, #76b9ed) 0 38px / 48px 2px no-repeat #5a584d;
}

.tray {
    display: flex;
    align-items: center;
    margin-right: 4px;
    padding-right: 16px;
    border-right: 1px solid #757b75;
}

.tray svg {
    width: 24px;
    height: 24px;
    fill: none;
    stroke: #fff;
}

.tray .ink {
    margin: 0 1px 0 4px;
}

.tray .dim {
    stroke: #7c827c;
}

.lang,
.clock {
    display: grid;
    width: 40px;
    line-height: 17px;
    text-align: center;
}

.clock {
    width: 66px;
}

.tray .notes {
    margin-left: 11px;
}
</style>
